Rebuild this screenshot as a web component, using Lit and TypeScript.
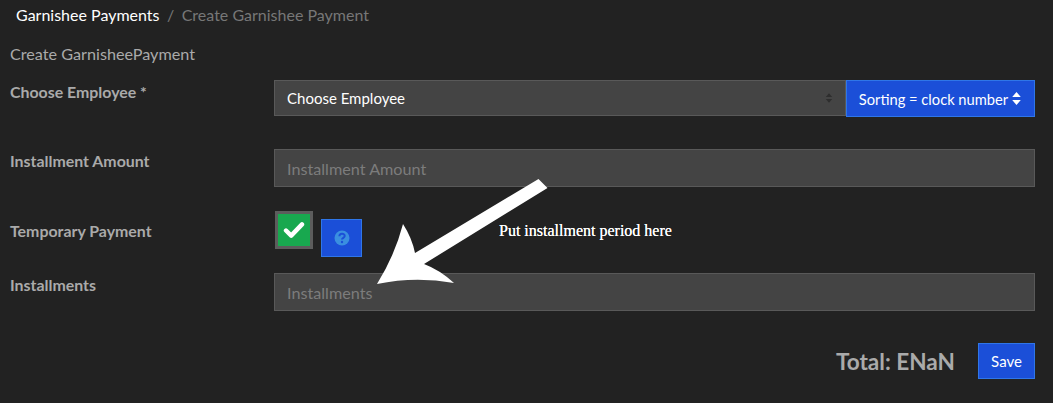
import { LitElement, html, css } from "lit";
import { customElement } from "lit/decorators.js";

@customElement("app-root")
export class AppRoot extends LitElement {
  static styles = css`
    :host { display: block; position: relative; width: 1053px; height: 403px; overflow: hidden; background: #222; color: #aaa; font-family: Lato, sans-serif; font-size: 16px; box-sizing: border-box; }
    * { box-sizing: border-box; }
    .crumbs { display: flex; height: 30px; align-items: center; padding-left: 16px; color: #777; line-height: 20px; }
    .crumbs b { font-weight: 400; color: #fff; }
    .crumbs i { font-style: normal; padding: 0 7.5px; }
    .title { margin: 14px 0 0 10px; line-height: 20px; color: #aaa; font-size: 16.2px; }
    .form { margin: 16px 18px 0 10px; display: flex; flex-direction: column; }
    .row { display: grid; grid-template-columns: 264px 1fr; }
    .label { font-weight: 700; color: #aaa; line-height: 22px; font-size: 15.9px; }
    .r1 { height: 69px; }
    .r2 { height: 62px; }
    .r3 { height: 62px; }
    .r4 { height: 70px; }
    .r1 .label { padding-top: 1px; }
    .r2 .label { padding-top: 1px; }
    .r3 .label { padding-top: 9px; }
    .r4 .label { padding-top: 1px; }
    .group { display: flex; align-items: flex-start; }
    .select { flex: 1; height: 36px; background: #444; border: 1px solid #595959; color: #fff; display: flex; align-items: center; justify-content: space-between; padding: 0 12px; line-height: 20px; font-size: 15px; }
    .updown { display: block; }
    .btn { background: #1b4fd8; border: 1px solid #2f76e8; color: #fff; display: flex; align-items: center; justify-content: center; font-size: 15px; }
    .sort { width: 189px; height: 37px; gap: 3px; font-size: 14.7px; }
    .input { height: 38px; background: #444; border: 1px solid #595959; color: #7c7c7c; display: flex; align-items: center; padding: 1px 12px 0; font-size: 16.2px; }
    .temp { display: flex; align-items: flex-start; gap: 8px; padding-left: 1px; }
    .check { width: 38px; height: 38px; background: #18a84f; border: 3px solid #5c5c5c; display: flex; align-items: center; justify-content: center; }
    .help { margin-top: 8px; width: 41px; height: 38px; }
    .foot { display: flex; justify-content: flex-end; align-items: center; gap: 23px; margin-right: 18px; height: 36px; }
    .total { font-size: 22.6px; font-weight: 700; color: #aaa; }
    .save { width: 57px; height: 36px; }
    .arrow { position: absolute; left: 0; top: 0; pointer-events: none; }
    .note { position: absolute; left: 499px; top: 222px; font-family: "Liberation Serif", serif; font-size: 16px; line-height: 18px; color: #fff; text-shadow: 0 0 0.3px #fff; }
  `;

  private updown(color: string, w: number, h: number) {
    return html`<svg class="updown" width=${w} height=${h} viewBox="0 0 10 14"><path fill=${color} d="M1 5.6 5 1l4 4.6zM1 8.4 5 13l4-4.6z"/></svg>`;
  }

  render() {
    return html`
      <nav class="crumbs"><b>Garnishee Payments</b><i>/</i><span>Create Garnishee Payment</span></nav>
      <div class="title">Create GarnisheePayment</div>
      <div class="form">
        <div class="row r1">
          <div class="label">Choose Employee *</div>
          <div class="group">
            <div class="select"><span>Choose Employee</span>${this.updown("#2e2e2e", 8, 12)}</div>
            <div class="btn sort"><span>Sorting = clock number</span>${this.updown("#fff", 11, 15)}</div>
          </div>
        </div>
        <div class="row r2">
          <div class="label">Installment Amount</div>
          <div class="input">Installment Amount</div>
        </div>
        <div class="row r3">
          <div class="label">Temporary Payment</div>
          <div class="temp">
            <div class="check"><svg width="22" height="18" viewBox="0 0 22 18"><path fill="none" stroke="#fff" stroke-width="4.4" stroke-linecap="round" stroke-linejoin="round" d="M3 9.5 8.2 14.6 19 3.4"/></svg></div>
            <div class="btn help"><svg width="16" height="16" viewBox="0 0 16 16"><circle cx="8" cy="8" r="7.5" fill="#3a8fe0"/><path fill="none" stroke="#1b4fd8" stroke-width="2" d="M5.4 6.2c0-3.2 5.3-3.2 5.3-.2 0 1.8-2.7 1.8-2.7 3.6"/><circle cx="8" cy="12" r="1.2" fill="#1b4fd8"/></svg></div>
          </div>
        </div>
        <div class="row r4">
          <div class="label">Installments</div>
          <div class="input">Installments</div>
        </div>
      </div>
      <div class="foot"><span class="total">Total: ENaN</span><div class="btn save">Save</div></div>
      <svg class="arrow" width="1053" height="403" viewBox="0 0 1053 403"><path fill="#fff" d="M538.5 179 L547.5 188 L424 264 Q 440 270 454 283 Q 415 276 377 284 Q 395 255 403 224 Q 412 238 415 253 Z"/></svg>
      <div class="note">Put installment period here</div>
    `;
  }
}
